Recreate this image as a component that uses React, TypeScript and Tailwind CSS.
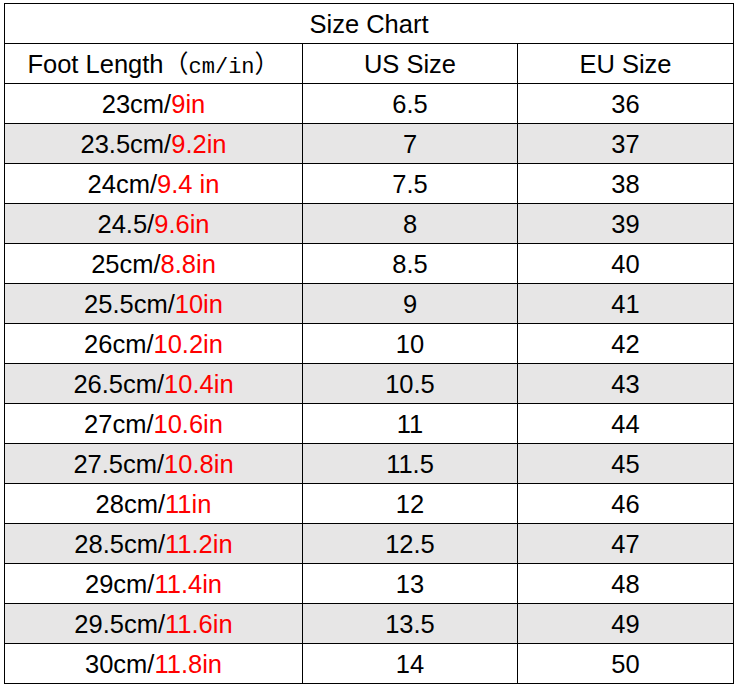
const rows: [string, string, string, string][] = [
  ['23cm/', '9in', '6.5', '36'],
  ['23.5cm/', '9.2in', '7', '37'],
  ['24cm/', '9.4 in', '7.5', '38'],
  ['24.5/', '9.6in', '8', '39'],
  ['25cm/', '8.8in', '8.5', '40'],
  ['25.5cm/', '10in', '9', '41'],
  ['26cm/', '10.2in', '10', '42'],
  ['26.5cm/', '10.4in', '10.5', '43'],
  ['27cm/', '10.6in', '11', '44'],
  ['27.5cm/', '10.8in', '11.5', '45'],
  ['28cm/', '11in', '12', '46'],
  ['28.5cm/', '11.2in', '12.5', '47'],
  ['29cm/', '11.4in', '13', '48'],
  ['29.5cm/', '11.6in', '13.5', '49'],
  ['30cm/', '11.8in', '14', '50'],
];

export default function App() {
  return (
    <div className="w-[736px] h-[687px] bg-white pt-[3px] pl-[4px]" style={{ fontFamily: '"Liberation Sans", Arial, sans-serif' }}>
      <table className="border-collapse table-fixed w-[729px] text-[25.5px] text-black">
        <colgroup>
          <col className="w-[298px]" />
          <col className="w-[215px]" />
          <col className="w-[216px]" />
        </colgroup>
        <tbody>
          <tr className="h-[40px]">
            <td colSpan={3} className="border border-black text-center p-0 pt-[2px] leading-none">Size Chart</td>
          </tr>
          <tr className="h-[40px]">
            <td className="border border-black text-center p-0 pt-[2px] leading-none whitespace-nowrap">
              Foot Length
              <span style={{ fontFamily: '"Noto Sans CJK SC", sans-serif' }} className="text-[25px]">（</span>
              <span style={{ fontFamily: '"Liberation Mono", monospace' }} className="text-[22px]">cm/in</span>
              <span style={{ fontFamily: '"Noto Sans CJK SC", sans-serif' }} className="text-[25px]">）</span>
            </td>
            <td className="border border-black text-center p-0 pt-[2px] leading-none">US Size</td>
            <td className="border border-black text-center p-0 pt-[2px] leading-none">EU Size</td>
          </tr>
          {rows.map((r, i) => (
            <tr key={i} className={`h-[40px] ${i % 2 === 1 ? 'bg-[#e7e6e6]' : 'bg-white'}`}>
              <td className="border border-black text-center p-0 pt-[2px] leading-none">
                {r[0]}
                <span className="text-[#ff0000]">{r[1]}</span>
              </td>
              <td className="border border-black text-center p-0 pt-[2px] leading-none">{r[2]}</td>
              <td className="border border-black text-center p-0 pt-[2px] leading-none">{r[3]}</td>
            </tr>
          ))}
        </tbody>
      </table>
    </div>
  );
}
